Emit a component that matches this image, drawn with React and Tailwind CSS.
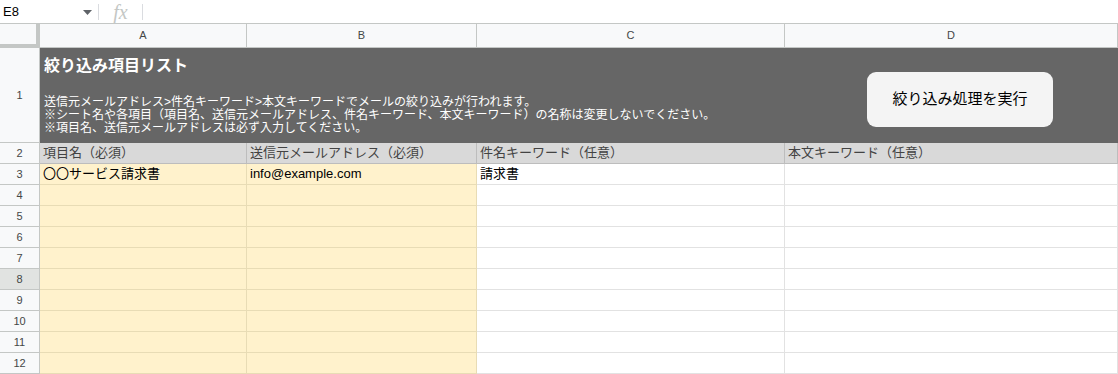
const FONT = "font-['Liberation_Sans','Noto_Sans_CJK_JP',sans-serif]"

const cols = ["A", "B", "C", "D"]
const headers = ["項目名（必須）", "送信元メールアドレス（必須）", "件名キーワード（任意）", "本文キーワード（任意）"]
const rows = [
  ["〇〇サービス請求書", "info@example.com", "請求書", ""],
  ...Array.from({ length: 9 }, () => ["", "", "", ""]),
]

function RowHead({ n, h = "h-[21px]", active }) {
  return (
    <div
      className={`${h} flex items-center justify-center border-r border-b border-[#c4c7c5] text-[11px] text-[#444746] ${
        active ? "bg-[#e1e3e1]" : "bg-[#f8f9fa]"
      }`}
    >
      {n}
    </div>
  )
}

export default function App() {
  return (
    <div className={`w-[1118px] h-[374px] overflow-hidden bg-white ${FONT}`}>
      {/* formula bar */}
      <div className="h-[24px] flex items-center border-b border-[#c4c7c5] bg-white">
        <div className="w-[98px] flex items-center justify-between pl-[3px] pr-[6px] text-[13px] text-black">
          <span>E8</span>
          <svg width="9" height="5" viewBox="0 0 9 5" className="mt-[1px]">
            <path d="M0 0h9L4.5 5z" fill="#5f6368" />
          </svg>
        </div>
        <div className="w-px h-[16px] bg-[#dadce0]" />
        <div className="w-[43px] flex justify-center text-[20px] italic text-[#c4c7c5] font-['Liberation_Serif',serif] leading-none">
          fx
        </div>
        <div className="w-px h-[16px] bg-[#dadce0]" />
      </div>

      <div className="grid grid-cols-[40px_207px_230px_308px_333px]">
        {/* column letters */}
        <div className="h-[24px] bg-[#f8f9fa] border-r-[4px] border-b-[4px] border-[#c4c7c5]" />
        {cols.map((c) => (
          <div
            key={c}
            className="h-[24px] flex items-center justify-center bg-[#f8f9fa] border-r border-b border-[#c4c7c5] text-[11px] text-[#444746]"
          >
            {c}
          </div>
        ))}

        {/* row 1 — merged title block */}
        <RowHead n={1} h="h-[95px]" />
        <div className="relative col-span-4 h-[95px] bg-[#666666] text-white px-[4px] pt-[8px]">
          <div className="text-[16px] font-bold leading-[20px]">絞り込み項目リスト</div>
          <div className="mt-[20px] text-[12px] leading-[13px]">
            <div>送信元メールアドレス&gt;件名キーワード&gt;本文キーワードでメールの絞り込みが行われます。</div>
            <div>※シート名や各項目（項目名、送信元メールアドレス、件名キーワード、本文キーワード）の名称は変更しないでください。</div>
            <div>※項目名、送信元メールアドレスは必ず入力してください。</div>
          </div>
          {/* floating drawing button */}
          <button className="absolute left-[827px] top-[24px] w-[186px] h-[55px] rounded-[9px] bg-[#f4f4f4] text-[15px] text-black">
            絞り込み処理を実行
          </button>
        </div>

        {/* row 2 — headers */}
        <RowHead n={2} />
        {headers.map((t, i) => (
          <div
            key={i}
            className="h-[21px] flex items-center px-[3px] bg-[#d9d9d9] border-r border-b border-[#bdbdbd] text-[13px] text-[#434343] whitespace-nowrap overflow-hidden"
          >
            {t}
          </div>
        ))}

        {/* data rows */}
        {rows.map((r, ri) => (
          <div key={ri} className="contents">
            <RowHead n={ri + 3} active={ri + 3 === 8} />
            {r.map((v, ci) => (
              <div
                key={ci}
                className={`h-[21px] flex items-center px-[3px] border-r border-b text-[13px] text-black whitespace-nowrap overflow-hidden ${
                  ci < 2 ? "bg-[#fff2cc] border-[#e8dcb5]" : "bg-white border-[#e2e2e2]"
                }`}
              >
                {v}
              </div>
            ))}
          </div>
        ))}
      </div>
    </div>
  )
}
